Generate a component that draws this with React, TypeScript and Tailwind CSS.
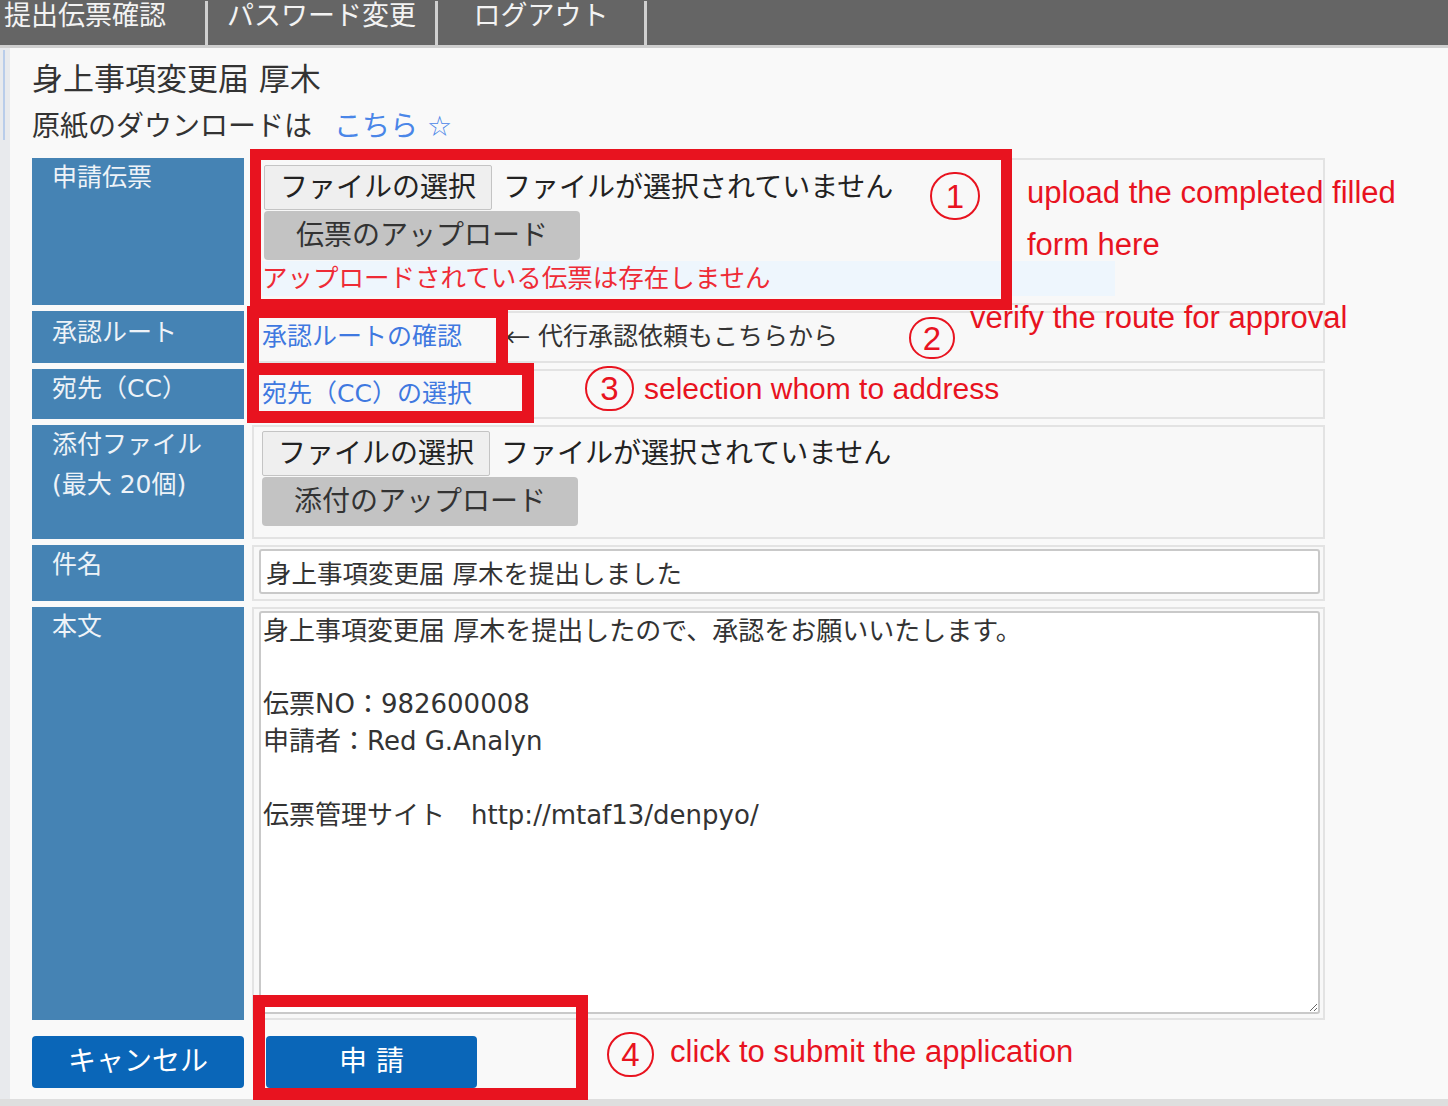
import React from "react";

const jp = "font-['DejaVu_Sans','Noto_Sans_CJK_JP',sans-serif]";
const en = "font-['Liberation_Sans',Arial,sans-serif]";

function Label({ children }: { children: React.ReactNode }) {
  return (
    <div className="w-[212px] shrink-0 bg-[#4583b4] pl-[20px] text-[25px] leading-[40px] text-[#eef3f8]">
      {children}
    </div>
  );
}

function Cell({ children, className = "" }: { children?: React.ReactNode; className?: string }) {
  return (
    <div className={`flex-1 border-2 border-[#e3e3e3] bg-[#f8f8f8] ${className}`}>
      {children}
    </div>
  );
}

function FilePicker() {
  return (
    <div className="flex h-[45px] items-center">
      <span className="flex h-full items-center rounded-[2px] border border-[#c4c4c4] bg-[#efefef] px-[15px] text-[28px] text-[#222]">
        ファイルの選択
      </span>
      <span className="ml-[11px] text-[28px] text-[#222]">ファイルが選択されていません</span>
    </div>
  );
}

function UploadButton({ label }: { label: string }) {
  return (
    <div className="mt-px flex h-[49px] w-[316px] items-center justify-center rounded-[4px] bg-[#c3c3c3] text-[28px] text-[#333]">
      {label}
    </div>
  );
}

function Circled({ n, className }: { n: string; className: string }) {
  return (
    <div
      className={`absolute flex items-center justify-center rounded-full border-2 border-[#e8131f] text-[33px] leading-none text-[#e8131f] ${en} ${className}`}
    >
      {n}
    </div>
  );
}

const body =
  "身上事項変更届 厚木を提出したので、承認をお願いいたします。\n\n伝票NO：982600008\n申請者：Red G.Analyn\n\n伝票管理サイト　http://mtaf13/denpyo/";

export default function App() {
  return (
    <div className={`relative flex h-[1106px] w-[1448px] flex-col overflow-hidden bg-[#f9f9f9] ${jp}`}>
      {/* top menu */}
      <nav className="flex h-[48px] shrink-0 border-b-[3px] border-[#cfcfcf] bg-[#656565] pt-[1px] text-[27px] leading-[30px] text-[#f3f3f3]">
        <div className="w-[208px] border-r-[3px] border-[#d0d0d0] pl-[4px]">提出伝票確認</div>
        <div className="flex w-[230px] justify-center border-r-[3px] border-[#d0d0d0]">パスワード変更</div>
        <div className="flex w-[209px] justify-center border-r-[3px] border-[#d0d0d0]">ログアウト</div>
      </nav>

      <div className="flex flex-1">
        {/* left strip */}
        <div className="w-[10px] shrink-0 bg-[#e8eaed] pt-[2px]">
          <div className="ml-[3px] h-[90px] w-[2px] bg-[#b9cdea]" />
        </div>

        <main className="flex-1 pl-[22px] text-[#333]">
          <div className="pt-[8px] leading-[47px]">
            <div className="text-[31px]">身上事項変更届 厚木</div>
            <div className="text-[28px]">
              原紙のダウンロードは<span className="ml-[22px] text-[#4a86e8]">こちら ☆</span>
            </div>
          </div>

          <div className="mt-[8px] flex w-[1293px] flex-col gap-[6px]">
            <div className="flex h-[147px] gap-[8px]">
              <Label>申請伝票</Label>
              <Cell className="pl-[10px] pt-[5px]">
                <FilePicker />
                <UploadButton label="伝票のアップロード" />
                <div className="-ml-[2px] mt-[1px] h-[35px] w-[853px] bg-[#eef6fd] text-[25.5px] leading-[35px] text-[#ee2b36]">
                  アップロードされている伝票は存在しません
                </div>
              </Cell>
            </div>

            <div className="flex h-[52px] gap-[8px]">
              <Label>
                <div className="pt-[2px]">承認ルート</div>
              </Label>
              <Cell className="flex items-center pl-[8px] text-[25px]">
                <span className="text-[#3f78e0]">承認ルートの確認</span>
                <span className="ml-[43px] font-['Noto_Sans_CJK_JP',sans-serif]">←</span>
                <span className="ml-[8px]">代行承認依頼もこちらから</span>
              </Cell>
            </div>

            <div className="flex h-[50px] gap-[8px]">
              <Label>宛先（CC）</Label>
              <Cell className="flex items-center pl-[8px] text-[25px]">
                <span className="text-[#3f78e0]">宛先（CC）の選択</span>
              </Cell>
            </div>

            <div className="flex h-[114px] gap-[8px]">
              <Label>
                <div>添付ファイル</div>
                <div>(最大 20個)</div>
              </Label>
              <Cell className="pl-[8px] pt-[4px]">
                <FilePicker />
                <UploadButton label="添付のアップロード" />
              </Cell>
            </div>

            <div className="flex h-[56px] gap-[8px]">
              <Label>件名</Label>
              <Cell className="pl-[5px] pr-[3px] pt-[2px]">
                <input
                  readOnly
                  value="身上事項変更届 厚木を提出しました"
                  className={`h-[45px] w-full rounded-[3px] border-2 border-[#c9c9c9] bg-white pl-[5px] text-[25.5px] text-[#333] outline-none ${jp}`}
                />
              </Cell>
            </div>

            <div className="flex h-[413px] gap-[8px]">
              <Label>本文</Label>
              <Cell className="pl-[5px] pr-[3px] pt-[2px]">
                <textarea
                  readOnly
                  value={body}
                  className={`block h-[403px] w-full rounded-[3px] border-2 border-[#c9c9c9] bg-white pl-[2px] text-[26px] leading-[36.7px] text-[#333] outline-none ${jp}`}
                />
              </Cell>
            </div>
          </div>

          <div className="mt-[16px] flex h-[52px] gap-[22px]">
            <div className="flex w-[212px] items-center justify-center rounded-[4px] bg-[#0a66b8] text-[28px] text-white">
              キャンセル
            </div>
            <div className="flex w-[211px] items-center justify-center rounded-[4px] bg-[#0a66b8] text-[28px] text-white">
              申 請
            </div>
          </div>
        </main>
      </div>

      <div className="h-[7px] shrink-0 bg-[#dedede]" />

      {/* annotation overlay */}
      <div className="absolute left-[250px] top-[149px] h-[161px] w-[762px] border-[11px] border-[#e8131f]" />
      <div className="absolute left-[247px] top-[306px] h-[69px] w-[261px] border-[12px] border-[#e8131f]" />
      <div className="absolute left-[247px] top-[363px] h-[60px] w-[287px] border-[12px] border-[#e8131f]" />
      <div className="absolute left-[253px] top-[995px] h-[105px] w-[335px] border-[12px] border-[#e8131f]" />

      <Circled n="1" className="left-[930px] top-[172px] h-[48px] w-[50px]" />
      <Circled n="2" className="left-[909px] top-[317px] h-[42px] w-[46px]" />
      <Circled n="3" className="left-[585px] top-[366px] h-[45px] w-[49px]" />
      <Circled n="4" className="left-[607px] top-[1032px] h-[45px] w-[47px]" />

      <div className={`absolute left-[1027px] top-[177px] text-[31px] leading-none text-[#e8131f] ${en}`}>
        upload the completed filled
      </div>
      <div className={`absolute left-[1027px] top-[229px] text-[31px] leading-none text-[#e8131f] ${en}`}>
        form here
      </div>
      <div className={`absolute left-[970px] top-[302px] text-[31px] leading-none text-[#e8131f] ${en}`}>
        verify the route for approval
      </div>
      <div className={`absolute left-[644px] top-[374px] text-[30px] leading-none text-[#e8131f] ${en}`}>
        selection whom to address
      </div>
      <div className={`absolute left-[670px] top-[1036px] text-[31px] leading-none text-[#e8131f] ${en}`}>
        click to submit the application
      </div>
    </div>
  );
}
